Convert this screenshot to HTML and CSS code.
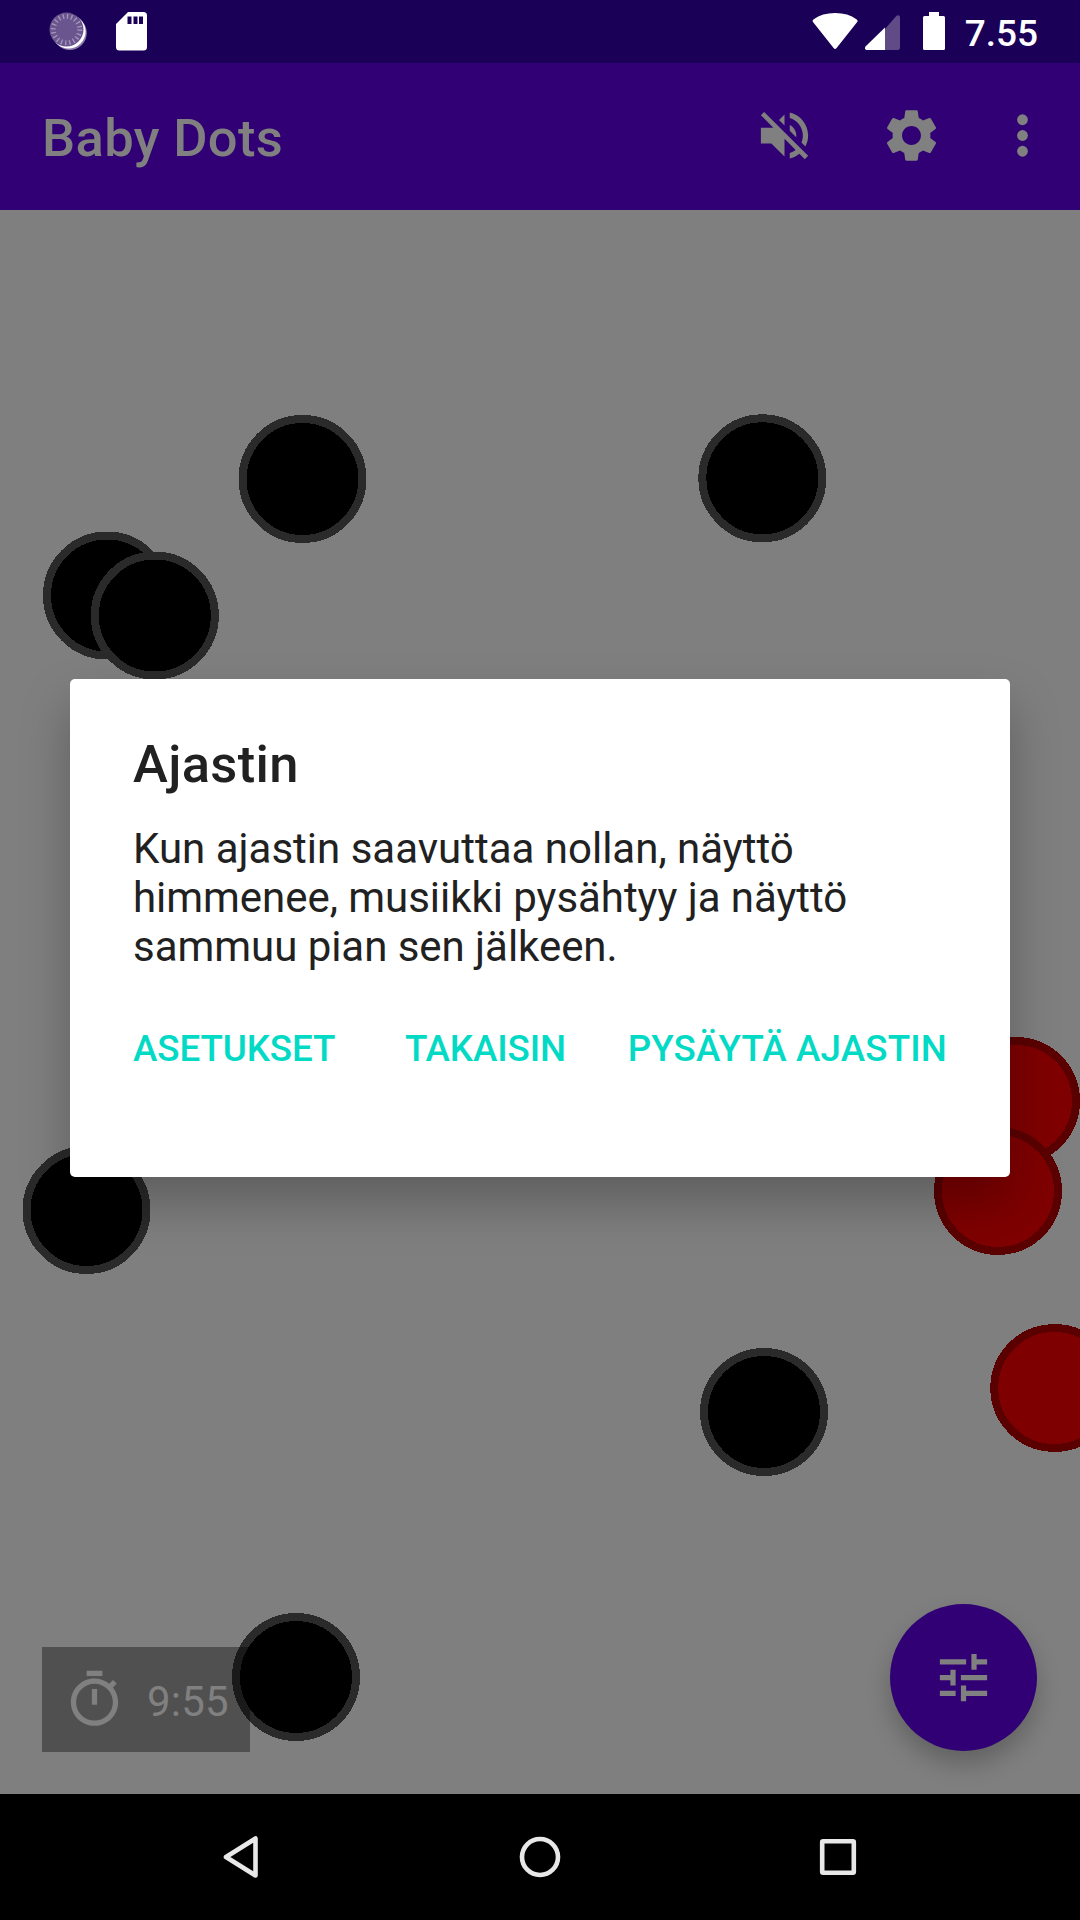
FILE: index.html
```html
<!DOCTYPE html>
<html lang="fi">
<head>
<meta charset="utf-8">
<title>Baby Dots</title>
<link rel="stylesheet" href="styles.css">
</head>
<body>
<div class="screen">
  <header class="status">
    <svg class="status-left" width="160" height="63" viewBox="0 0 160 63">
      <circle cx="69.8" cy="33" r="17" fill="#8a7ba8"/>
      <circle cx="68.6" cy="31.6" r="17" fill="#fff"/>
      <circle cx="66.5" cy="29.6" r="17" fill="#6a558f"/>
      <circle cx="66.5" cy="29.6" r="13.2" fill="none" stroke="#a497bb" stroke-width="5" stroke-dasharray="1.3 2.847"/>
      <path fill="#fff" fill-rule="evenodd" d="M128 12h15.500a3.500 3.500 0 0 1 3.500 3.500v31.500a3.500 3.500 0 0 1-3.500 3.500h-24a3.500 3.500 0 0 1-3.500-3.500v-23zM127.500 16.500v7.500h4v-7.500zM133.500 16.500v7.500h4v-7.500zM139 16.500v7.500h4v-7.500z"/>
    </svg>
    <div class="status-right">
      <svg width="136" height="63" viewBox="812 0 136 63">
        <path fill="#fff" d="M813.200 22.300Q811.800 20.500 813.800 19.200Q822 13 835.100 13Q848.200 13 856.400 19.200Q858.400 20.500 857 22.300L836.600 48Q835.100 49.800 833.600 48z"/>
        <path fill="#614b86" d="M885 29l11.500-13.300q3.500-1.500 3.500 1.800v30q0 2.500-2.500 2.500H885z"/>
        <path fill="#fff" d="M885 27.500V50h-18.500q-2.500-1-1-3.500z"/>
        <path fill="#fff" d="M929 12h10v4h4.500q1.500 0 1.500 1.500v31q0 1.500-1.500 1.500h-19q-1.500 0-1.500-1.500v-31q0-1.500 1.500-1.500h4.500z"/>
      </svg>
      <span class="clock">7.55</span>
    </div>
  </header>

  <div class="appbar">
    <h1 class="app-title">Baby Dots</h1>
    <div class="actions">
      <svg class="icon" viewBox="0 0 24 24"><path d="M16.5 12c0-1.770-1.020-3.290-2.500-4.030v2.210l2.450 2.450c.03-.2.05-.41.05-.63zm2.500 0c0 .94-.2 1.820-.54 2.640l1.510 1.510C20.630 14.910 21 13.500 21 12c0-4.280-2.990-7.860-7-8.770v2.060c2.890.86 5 3.540 5 6.710zM4.270 3L3 4.270 7.730 9H3v6h4l5 5v-6.730l4.250 4.250c-.67.52-1.420.93-2.250 1.180v2.060c1.380-.31 2.630-.95 3.690-1.810L19.730 21 21 19.730l-9-9L4.270 3zM12 4L9.910 6.090 12 8.180V4z"/></svg>
      <svg class="icon" viewBox="0 0 24 24"><path d="M19.140 12.940c.04-.3.06-.61.06-.94 0-.32-.02-.64-.07-.94l2.030-1.580c.18-.14.23-.41.12-.61l-1.920-3.320c-.12-.22-.37-.29-.59-.22l-2.390.96c-.5-.38-1.030-.7-1.620-.94l-.36-2.540c-.04-.24-.24-.41-.48-.41h-3.840c-.24 0-.43.17-.47.41l-.36 2.540c-.59.24-1.130.57-1.620.94l-2.390-.96c-.22-.08-.47 0-.59.22L2.740 8.870c-.12.21-.08.47.12.61l2.030 1.580c-.05.3-.09.63-.09.94s.02.64.07.94l-2.030 1.580c-.18.14-.23.41-.12.61l1.920 3.320c.12.22.37.29.59.22l2.390-.96c.5.38 1.030.7 1.620.94l.36 2.540c.05.24.24.41.48.41h3.840c.24 0 .44-.17.47-.41l.36-2.540c.59-.24 1.130-.56 1.620-.94l2.390.96c.22.08.47 0 .59-.22l1.920-3.320c.12-.22.07-.47-.12-.61l-2.010-1.580zM12 15.600c-1.980 0-3.600-1.620-3.600-3.600s1.620-3.600 3.600-3.600 3.600 1.620 3.600 3.600-1.620 3.600-3.600 3.600z"/></svg>
      <svg class="icon more" viewBox="0 0 24 24"><circle cx="12" cy="6" r="2.050"/><circle cx="12" cy="12" r="2.050"/><circle cx="12" cy="18" r="2.050"/></svg>
    </div>
  </div>

  <main class="play">
    <svg class="dots" width="1080" height="1584" viewBox="0 210 1080 1584">
      <g class="dot-black">
        <circle cx="302.500" cy="479" r="60"/>
        <circle cx="762.300" cy="478.300" r="60"/>
        <circle cx="107" cy="595.500" r="60"/>
        <circle cx="154.800" cy="615.500" r="60"/>
        <circle cx="86.500" cy="1210" r="60"/>
        <circle cx="764" cy="1412" r="60"/>
        <circle cx="296" cy="1677" r="60"/>
      </g>
      <g class="dot-red">
        <circle cx="1016" cy="1101" r="60"/>
        <circle cx="998" cy="1191" r="60"/>
        <circle cx="1054.300" cy="1388" r="60"/>
      </g>
    </svg>
    <div class="timer">
      <svg class="icon" viewBox="0 0 24 24"><path d="M15 1H9v2h6V1zm-4 13h2V8h-2v6zm8.030-6.610l1.420-1.420c-.43-.51-.9-.99-1.410-1.410l-1.420 1.420C16.070 4.740 14.120 4 12 4c-4.970 0-9 4.030-9 9s4.020 9 9 9 9-4.030 9-9c0-2.120-.74-4.070-1.970-5.610zM12 20c-3.870 0-7-3.130-7-7s3.130-7 7-7 7 3.130 7 7-3.130 7-7 7z"/></svg>
      <span class="timer-text">9:55</span>
    </div>
    <div class="fab">
      <svg class="icon" viewBox="0 0 24 24"><path d="M3 17v2h6v-2H3zM3 5v2h10V5H3zm10 16v-2h8v-2h-8v-2h-2v6h2zM7 9v2H3v2h4v2h2V9H7zm14 4v-2H11v2h10zm-6-4h2V7h4V5h-4V3h-2v6z"/></svg>
    </div>
  </main>

  <nav class="navbar">
    <svg width="126" height="126" viewBox="0 0 126 126"><path d="M61.500 45.500v37L32 64z" transform="translate(15 -1)"/></svg>
    <svg width="126" height="126" viewBox="0 0 126 126"><circle cx="63" cy="63" r="18"/></svg>
    <svg width="126" height="126" viewBox="0 0 126 126"><rect x="47.200" y="47.200" width="31.600" height="31.600" rx="1"/></svg>
  </nav>

  <div class="overlay">
    <section class="dialog">
      <h2 class="dialog-title">Ajastin</h2>
      <p class="dialog-text">Kun ajastin saavuttaa nollan, näyttö<br><span class="tight">himmenee, musiikki pysähtyy ja näyttö</span><br><span class="tight">sammuu pian sen jälkeen.</span></p>
      <div class="buttons">
        <span class="btn first">ASETUKSET</span>
        <span class="btn mid">TAKAISIN</span>
        <span class="btn last">PYSÄYTÄ AJASTIN</span>
      </div>
    </section>
  </div>
</div>
</body>
</html>
```
FILE: styles.css
```css
* { box-sizing: border-box; margin: 0; padding: 0; }
body { background: #000; font-family: Roboto, sans-serif; }
svg { display: block; flex: none; }

.screen {
  position: relative;
  display: flex;
  flex-direction: column;
  width: 1080px;
  height: 1920px;
  overflow: hidden;
}

.status {
  display: flex;
  justify-content: space-between;
  height: 63px;
  background: #1b0058;
}
.status-right { display: flex; align-items: center; padding-right: 42px; gap: 17px; }
.clock { color: #fff; font-size: 37px; font-weight: 500; line-height: 63px; padding-top: 3px; }

.appbar {
  display: flex;
  align-items: center;
  justify-content: space-between;
  height: 147px;
  padding: 0 26px 0 42px;
  background: #300074;
  color: #808080;
}
.app-title { font-size: 52.500px; font-weight: 500; line-height: 62px; letter-spacing: 0.35px; padding-top: 3px; }
.actions { display: flex; align-items: center; gap: 64px; padding-bottom: 2px; }
.icon { width: 63px; height: 63px; fill: #808080; }
.more { margin-left: -16px; }

.play {
  position: relative;
  display: flex;
  align-items: flex-end;
  justify-content: space-between;
  height: 1584px;
  padding: 0 43px 42px 42px;
  background: #7f7f7f;
  overflow: hidden;
}
.dots { position: absolute; left: 0; top: 0; shape-rendering: crispEdges; }
.dot-black { fill: #000; stroke: #2a2a2a; stroke-width: 8; }
.dot-red { fill: #7f0000; stroke: #5b0000; stroke-width: 8; }

.timer {
  position: relative;
  display: flex;
  align-items: center;
  gap: 21px;
  width: 208px;
  height: 105px;
  padding: 0 21px;
  background: rgba(0, 0, 0, 0.37);
  color: #808080;
}
.timer-text { font-size: 42px; line-height: 49px; letter-spacing: 0.2px; padding-top: 4px; }

.fab {
  position: relative;
  display: flex;
  align-items: center;
  justify-content: center;
  width: 147px;
  height: 147px;
  margin-bottom: 1px;
  border-radius: 50%;
  background: #300074;
  box-shadow: 0 13px 24px rgba(0, 0, 0, 0.23);
}

.navbar {
  display: flex;
  align-items: center;
  justify-content: center;
  gap: 172px;
  height: 126px;
  background: #000;
}
.navbar svg { fill: none; stroke: #e8e8e8; stroke-width: 4.600; stroke-linejoin: round; }

.overlay {
  position: absolute;
  left: 0;
  top: 63px;
  display: flex;
  align-items: center;
  justify-content: center;
  width: 1080px;
  height: 1730px;
}
.dialog {
  width: 940px;
  height: 498px;
  padding: 52px 63px 0;
  border-radius: 5px;
  background: #fff;
  color: #212121;
  box-shadow: 0 26px 50px rgba(0, 0, 0, 0.26);
}
.dialog-title { font-size: 52.500px; font-weight: 500; line-height: 62px; letter-spacing: 0.35px; padding-top: 2px; }
.dialog-text { font-size: 42px; line-height: 49px; margin-top: 29px; white-space: nowrap; }
.tight { letter-spacing: -0.04px; }
.buttons {
  display: flex;
  justify-content: space-between;
  margin-top: 56px;
  color: #03dac5;
  font-size: 36.750px;
  font-weight: 500;
  line-height: 44px;
  white-space: nowrap;
}
.first { letter-spacing: -0.1px; }
.mid { letter-spacing: -0.1px; margin-left: 8px; }
.last { letter-spacing: 0.15px; }
```
